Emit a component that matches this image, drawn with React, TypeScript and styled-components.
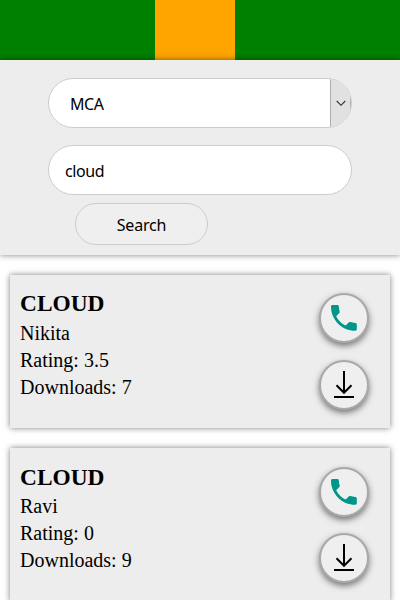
import React from 'react';
import styled, { createGlobalStyle } from 'styled-components';

const GlobalStyle = createGlobalStyle`
  * { box-sizing: border-box; }
  html, body { margin: 0; background: #fff; overflow: hidden; }
  body { font: 20px/27px "Liberation Serif", "Times New Roman", serif; color: #000; }
  button, input { margin: 0; font: inherit; color: inherit; }
`;

const Page = styled.div`
  height: 600px;
  overflow: hidden;
`;

const Header = styled.header`
  height: 60px;
  padding-left: 155px;
  background: green;
`;

const Logo = styled.div`
  width: 80px;
  height: 60px;
  background: orange;
`;

const SearchPanel = styled.form`
  position: relative;
  display: flex;
  flex-direction: column;
  align-items: flex-start;
  height: 195px;
  padding: 18px 48px 0;
  background: #ededed;
  box-shadow: 0 0 6px rgba(0, 0, 0, 0.5);
  font-family: "Noto Sans", sans-serif;
  font-size: 16px;
  line-height: 22px;
  letter-spacing: -0.4px;
`;

const Select = styled.div`
  display: flex;
  width: 304px;
  height: 50px;
  margin-bottom: 17px;
  border: 1px solid #ccc;
  border-radius: 25px;
  background: #fff;
  overflow: hidden;
`;

const SelectValue = styled.span`
  flex: 1;
  padding: 14px 0 0 21px;
`;

const SelectArrow = styled.span`
  display: flex;
  align-items: center;
  justify-content: center;
  width: 21px;
  border-left: 1px solid #adadad;
  border-right: 1px solid #adadad;
  background: #e1e1e1;
`;

const TextInput = styled.input`
  && {
    width: 304px;
    height: 50px;
    padding: 1px 16px 0;
    border: 1px solid #ccc;
    border-radius: 25px;
    background: #fff;
    letter-spacing: -0.4px;
    outline: none;
  }
`;

const SearchButton = styled.button`
  && {
    width: 133px;
    height: 42px;
    margin: 8px 0 0 27px;
    padding: 1px 0 0;
    border: 1px solid #ccc;
    border-radius: 21px;
    background: #efefef;
    letter-spacing: -0.2px;
  }
`;

const Results = styled.main`
  display: flex;
  flex-direction: column;
  gap: 20px;
  padding: 20px 10px;
`;

const Card = styled.article`
  display: flex;
  justify-content: space-between;
  height: 153.4px;
  padding: 15.2px 21px 0 10px;
  background: #ededed;
  box-shadow: 0 0 6px rgba(0, 0, 0, 0.5);
`;

const Title = styled.h3`
  margin: 0;
  font-size: 23.4px;
  line-height: 27px;
  padding-bottom: 2.85px;
`;

const Actions = styled.div`
  display: flex;
  flex-direction: column;
  gap: 16.8px;
  padding-top: 3px;
`;

const RoundButton = styled.button`
  && {
    display: flex;
    align-items: center;
    justify-content: center;
    width: 50px;
    height: 50px;
    padding: 0;
    border: 2px solid #a9a9a9;
    border-radius: 50%;
    background: #efefef;
    box-shadow: 0 3px 6px rgba(0, 0, 0, 0.5);
  }
`;

const PhoneIcon = () => (
  <svg width="36" height="36" viewBox="0 0 36 36" fill="#009688">
    <path
      transform="translate(.7 .7) scale(1.433)"
      d="M6.62 10.79c1.44 2.83 3.76 5.14 6.59 6.59l2.2-2.2c.27-.27.67-.36 1.02-.24 1.12.37 2.33.57 3.57.57.55 0 1 .45 1 1V20c0 .55-.45 1-1 1-9.39 0-17-7.61-17-17 0-.55.45-1 1-1h3.5c.55 0 1 .45 1 1 0 1.25.2 2.45.57 3.57.11.35.03.74-.25 1.02l-2.2 2.2z"
    />
  </svg>
);

const DownloadIcon = () => (
  <svg width="30" height="30" viewBox="0 0 30 30" fill="none" stroke="#000" strokeWidth="2">
    <path d="M15 1v22M7.5 15.3l7.5 7.5 7.5-7.5M5 27h20" />
  </svg>
);

const results = [
  { title: 'CLOUD', author: 'Nikita', rating: '3.5', downloads: 7 },
  { title: 'CLOUD', author: 'Ravi', rating: '0', downloads: 9 },
];

export default function App() {
  return (
    <Page>
      <GlobalStyle />
      <Header>
        <Logo />
      </Header>
      <SearchPanel onSubmit={(e: React.FormEvent) => e.preventDefault()}>
        <Select>
          <SelectValue>MCA</SelectValue>
          <SelectArrow>
            <svg width="10" height="7" viewBox="0 0 10 7" fill="none" stroke="#333" strokeWidth="1.1">
              <path d="M.7 1l4.3 4.3L9.3 1" />
            </svg>
          </SelectArrow>
        </Select>
        <TextInput defaultValue="cloud" />
        <SearchButton>Search</SearchButton>
      </SearchPanel>
      <Results>
        {results.map((r) => (
          <Card key={r.author}>
            <div>
              <Title>{r.title}</Title>
              <div>{r.author}</div>
              <div>Rating: {r.rating}</div>
              <div>Downloads: {r.downloads}</div>
            </div>
            <Actions>
              <RoundButton aria-label="Call">
                <PhoneIcon />
              </RoundButton>
              <RoundButton aria-label="Download">
                <DownloadIcon />
              </RoundButton>
            </Actions>
          </Card>
        ))}
      </Results>
    </Page>
  );
}
